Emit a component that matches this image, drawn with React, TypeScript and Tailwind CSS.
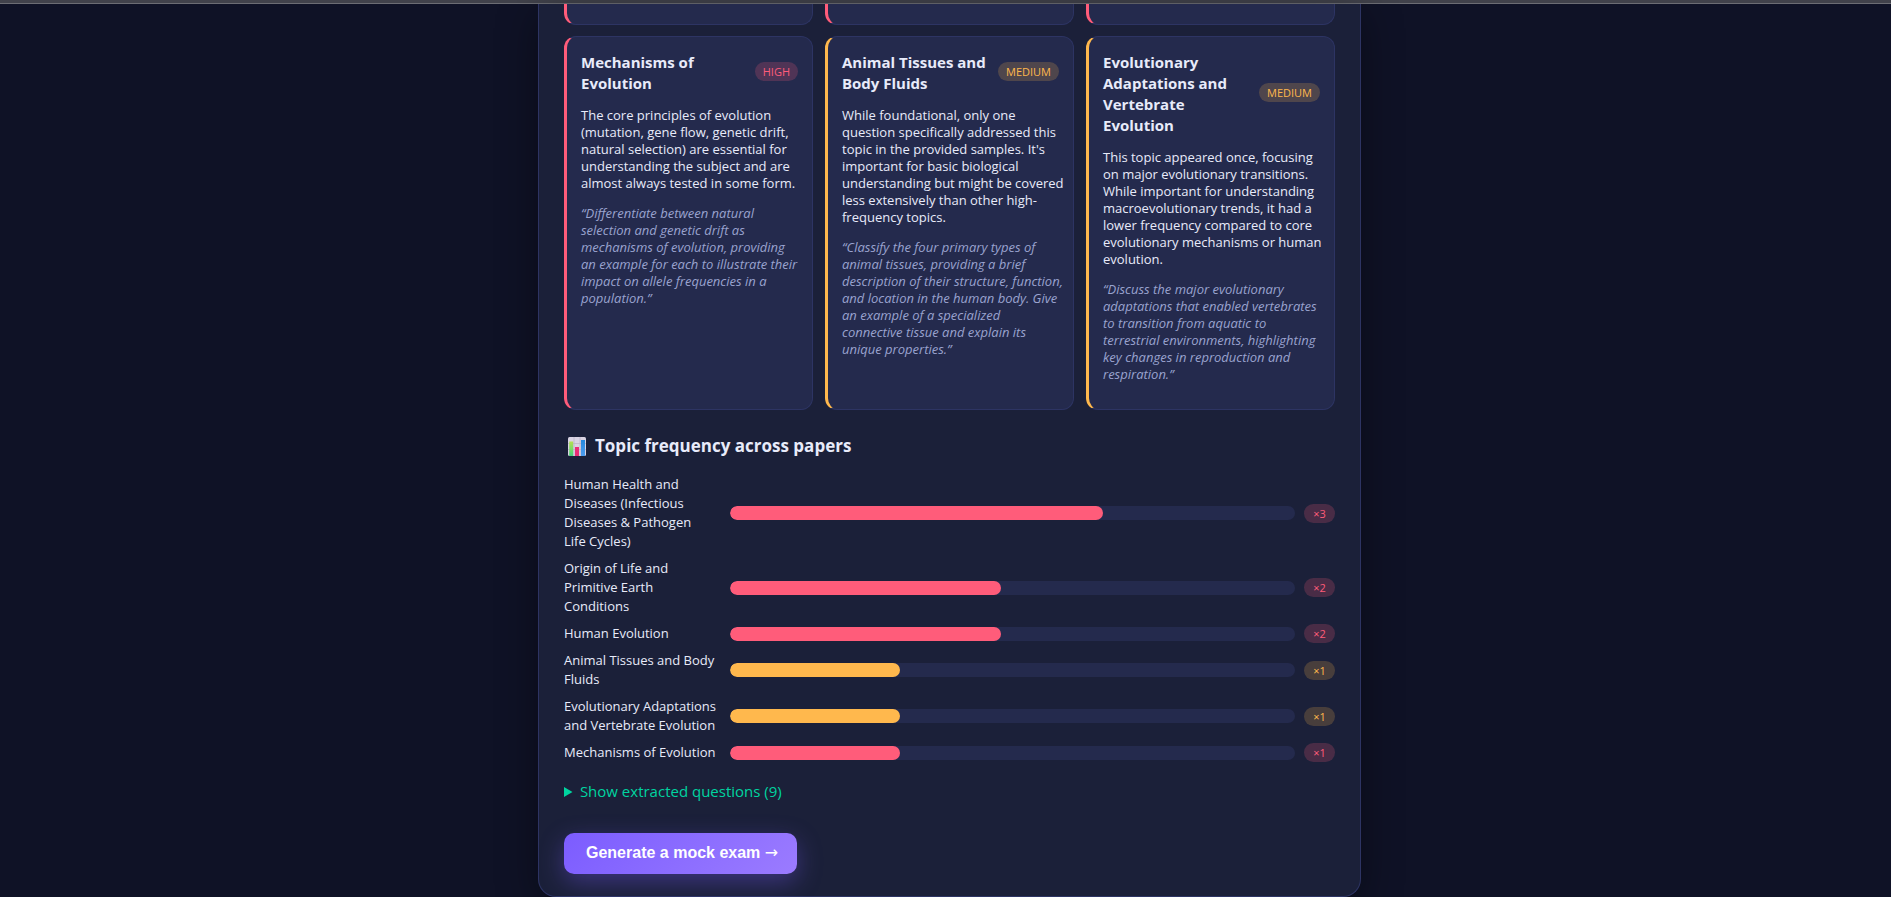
type Level = "high" | "medium";

const topics: { title: string; level: Level; body: string; quote: string }[] = [
  {
    title: "Mechanisms of Evolution",
    level: "high",
    body: "The core principles of evolution (mutation, gene flow, genetic drift, natural selection) are essential for understanding the subject and are almost always tested in some form.",
    quote:
      "“Differentiate between natural selection and genetic drift as mechanisms of evolution, providing an\u00a0example for each to illustrate their impact on allele frequencies in a population.”",
  },
  {
    title: "Animal Tissues and Body Fluids",
    level: "medium",
    body: "While foundational, only one question specifically addressed this topic in the provided samples. It's important for basic biological understanding but might be covered less extensively than other high-frequency topics.",
    quote:
      "“Classify the four primary types of animal tissues, providing a brief description of their structure, function, and location in the human body. Give an example of a specialized connective\u00a0tissue and explain its unique\u00a0properties.”",
  },
  {
    title: "Evolutionary Adaptations and Vertebrate Evolution",
    level: "medium",
    body: "This topic appeared once, focusing on major evolutionary transitions. While important for understanding macroevolutionary trends, it had a lower frequency compared to core evolutionary mechanisms or human evolution.",
    quote:
      "“Discuss the major evolutionary adaptations that enabled vertebrates to transition from aquatic to terrestrial\u00a0environments, highlighting key changes in reproduction and respiration.”",
  },
];

const frequencies: { label: string; level: Level; count: number; percent: number }[] = [
  { label: "Human Health and Diseases (Infectious Diseases & Pathogen Life\u00a0Cycles)", level: "high", count: 3, percent: 66 },
  { label: "Origin of Life and Primitive Earth Conditions", level: "high", count: 2, percent: 48 },
  { label: "Human Evolution", level: "high", count: 2, percent: 48 },
  { label: "Animal Tissues and Body Fluids", level: "medium", count: 1, percent: 30 },
  { label: "Evolutionary Adaptations and Vertebrate Evolution", level: "medium", count: 1, percent: 30 },
  { label: "Mechanisms of Evolution", level: "high", count: 1, percent: 30 },
];

const pillTone: Record<Level, string> = {
  high: "bg-[#ff5c7a]/20 text-[#ff5c7a]",
  medium: "bg-[#ffb84d]/20 text-[#ffb84d]",
};
const edgeTone: Record<Level, string> = {
  high: "border-l-[#ff5c7a]",
  medium: "border-l-[#ffb84d]",
};
const fillTone: Record<Level, string> = {
  high: "bg-[#ff5c7a]",
  medium: "bg-[#ffb84d]",
};

function ChartIcon() {
  return (
    <svg viewBox="0 0 18 19" className="mx-1 h-[19px] w-[18px] shrink-0" aria-hidden="true">
      <defs>
        <linearGradient id="green" x1="0" y1="0" x2="0" y2="1">
          <stop offset="0" stopColor="#b4e04f" />
          <stop offset="1" stopColor="#45d07c" />
        </linearGradient>
        <linearGradient id="blue" x1="0" y1="0" x2="0" y2="1">
          <stop offset="0" stopColor="#2488dd" />
          <stop offset="1" stopColor="#4f9df0" />
        </linearGradient>
      </defs>
      <rect width="18" height="19" rx="1.5" fill="#d9d3e3" />
      <path d="M0 6.5H18M0 12.5H18M6 0V19M12 0V19" stroke="#bdb5cb" strokeWidth="0.8" />
      <rect x="1.2" y="4.5" width="4" height="14.5" fill="url(#green)" />
      <rect x="7" y="10" width="4" height="9" fill="#ea2c76" />
      <rect x="13" y="3" width="4" height="16" fill="url(#blue)" />
    </svg>
  );
}

function TopicCard({ title, level, body, quote }: (typeof topics)[number]) {
  return (
    <article className={`rounded-xl border border-l-[3px] border-[#2d3463] bg-[#242a4d] px-[14px] pt-[15px] pb-[13px] ${edgeTone[level]}`}>
      <div className="flex items-center justify-between gap-2">
        <h3 className="text-[15px] leading-[21px] font-bold">{title}</h3>
        <span className={`mb-1 shrink-0 rounded-full px-2 text-[11px] leading-[19px] ${pillTone[level]}`}>{level.toUpperCase()}</span>
      </div>
      <div className="-mr-[7px] text-[13px] leading-[17px]">
        <p className="my-[13px]">{body}</p>
        <p className="my-[13px] text-[#9aa3cf] italic">{quote}</p>
      </div>
    </article>
  );
}

export default function App() {
  return (
    <div className="min-h-screen bg-[#0f1226] font-['Open_Sans','Noto_Sans',sans-serif] text-[#e8ebfa]">
      <div className="h-1 border-b border-[#6c6d74] bg-[#41424b]" />
      <div className="pl-2">
        <main className="mx-auto max-w-[823px] rounded-b-[18px] border border-t-0 border-[#2d3463] bg-[#1b2039] px-[25px] pb-[22px] shadow-[0_10px_40px_rgba(0,0,0,0.4)]">
          <div className="grid grid-cols-3 gap-x-3">
            {[0, 1, 2].map((i) => (
              <div key={i} className="h-[21px] rounded-b-xl border border-t-0 border-l-[3px] border-[#2d3463] border-l-[#ff5c7a] bg-[#242a4d]" />
            ))}
          </div>
          <section className="mt-[11px] grid grid-cols-3 gap-3">
            {topics.map((t) => (
              <TopicCard key={t.title} {...t} />
            ))}
          </section>

          <h2 className="mt-6 flex items-center gap-[5px] text-[17px] leading-6 font-bold">
            <ChartIcon />
            Topic frequency across papers
          </h2>
          <ul className="mt-[17px] flex flex-col gap-2">
            {frequencies.map((f) => (
              <li key={f.label} className="grid grid-cols-[157px_1fr_31px] items-center gap-[9px]">
                <span className="text-[13px] leading-[19px]">{f.label}</span>
                <div className="h-[14px] overflow-hidden rounded-full bg-[#242a4d]">
                  <div className={`h-full rounded-full ${fillTone[f.level]}`} style={{ width: `${f.percent}%` }} />
                </div>
                <span className={`rounded-full text-center text-[11px] leading-[19px] ${pillTone[f.level]}`}>×{f.count}</span>
              </li>
            ))}
          </ul>

          <details className="mt-[18px] text-[15px] leading-[22px] text-[#00d4a0]">
            <summary className="cursor-pointer">Show extracted questions (9)</summary>
          </details>
          <button
            type="button"
            className="mt-[31px] h-[41px] rounded-[10px] bg-linear-135 from-[#7c5cff] to-[#9b7bff] pr-[19px] pb-[2px] pl-[22px] font-['Liberation_Sans',sans-serif] text-base font-bold text-white shadow-[0_8px_24px_rgba(124,92,255,0.35)]"
          >
            Generate a mock exam <span className="font-['DejaVu_Sans',sans-serif] font-normal">→</span>
          </button>
        </main>
      </div>
    </div>
  );
}
